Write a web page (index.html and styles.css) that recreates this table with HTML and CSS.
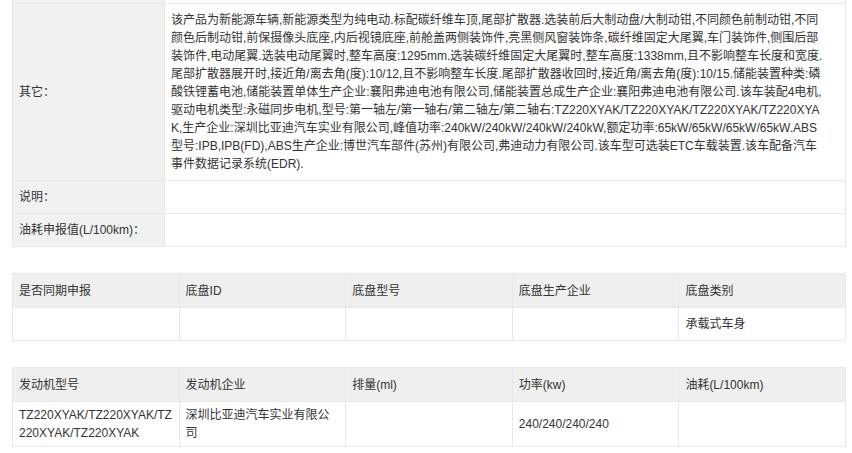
FILE: index.html
```html
<!DOCTYPE html>
<html>
  <head>
  <meta name="viewport" content="width=device-width, initial-scale=1.0">
  <meta charset="UTF-8">
  <link rel="stylesheet" href="styles.css">
  </head>
<body>

<div id="param-container">

    <table class="param-table param-info">
        <tr>
            <td class="param-label"></td>
            <td class="param-value"></td>
        </tr>
        <tr>
            <td class="param-label">其它：</td>
            <td class="param-value">该产品为新能源车辆,新能源类型为纯电动.标配碳纤维车顶,尾部扩散器.选装前后大制动盘/大制动钳,不同颜色前制动钳,不同颜色后制动钳,前保摄像头底座,内后视镜底座,前舱盖两侧装饰件,亮黑侧风窗装饰条,碳纤维固定大尾翼,车门装饰件,侧围后部装饰件,电动尾翼.选装电动尾翼时,整车高度:1295mm.选装碳纤维固定大尾翼时,整车高度:1338mm,且不影响整车长度和宽度.尾部扩散器展开时,接近角/离去角(度):10/12,且不影响整车长度.尾部扩散器收回时,接近角/离去角(度):10/15.储能装置种类:磷酸铁锂蓄电池,储能装置单体生产企业:襄阳弗迪电池有限公司,储能装置总成生产企业:襄阳弗迪电池有限公司.该车装配4电机,驱动电机类型:永磁同步电机,型号:第一轴左/第一轴右/第二轴左/第二轴右:TZ220XYAK/TZ220XYAK/TZ220XYAK/TZ220XYAK,生产企业:深圳比亚迪汽车实业有限公司,峰值功率:240kW/240kW/240kW/240kW,额定功率:65kW/65kW/65kW/65kW.ABS型号:IPB,IPB(FD),ABS生产企业:博世汽车部件(苏州)有限公司,弗迪动力有限公司.该车型可选装ETC车载装置.该车配备汽车事件数据记录系统(EDR).</td>
        </tr>
        <tr>
            <td class="param-label">说明：</td>
            <td class="param-value"></td>
        </tr>
        <tr>
            <td class="param-label">油耗申报值(L/100km)：</td>
            <td class="param-value"></td>
        </tr>
    </table>

    <table class="param-table param-grid">
        <tr>
            <th>是否同期申报</th>
            <th>底盘ID</th>
            <th>底盘型号</th>
            <th>底盘生产企业</th>
            <th>底盘类别</th>
        </tr>
        <tr>
            <td></td>
            <td></td>
            <td></td>
            <td></td>
            <td>承载式车身</td>
        </tr>
    </table>

    <table class="param-table param-grid">
        <tr>
            <th>发动机型号</th>
            <th>发动机企业</th>
            <th>排量(ml)</th>
            <th>功率(kw)</th>
            <th>油耗(L/100km)</th>
        </tr>
        <tr>
            <td>TZ220XYAK/TZ220XYAK/TZ220XYAK/TZ220XYAK</td>
            <td>深圳比亚迪汽车实业有限公司</td>
            <td></td>
            <td>240/240/240/240</td>
            <td></td>
        </tr>
    </table>

</div>

</body>
</html>
```

FILE: styles.css
```css
body{
margin: 0;
background-color: #ffffff;
color: #333333;
font-family: "Liberation Sans", "Noto Sans CJK SC", sans-serif;
font-size: 12px;
}

#param-container{
width: 834px;
margin-left: 12px;
}

.param-table{
width: 100%;
border-collapse: collapse;
table-layout: fixed;
margin-bottom: 26px;
}

.param-table td,
.param-table th{
border: 1px solid #e8e8e8;
line-height: 18px;
text-align: left;
font-weight: normal;
word-break: break-all;
}

.param-info{
margin-top: -30px;
}

.param-info tr{
height: 33px;
}

.param-info td{
padding: 7px 6px;
vertical-align: middle;
}

.param-info .param-label{
width: 139px;
background-color: #f1f1f1;
}

.param-info .param-value{
padding-right: 21px;
background-color: #ffffff;
}

/* lower tables: header row + data row */
.param-grid tr{
height: 33px;
}

.param-grid th{
background-color: #efefef;
padding: 8px 6px 7px;
}

.param-grid td{
padding: 4px 6px;
vertical-align: middle;
}
```
